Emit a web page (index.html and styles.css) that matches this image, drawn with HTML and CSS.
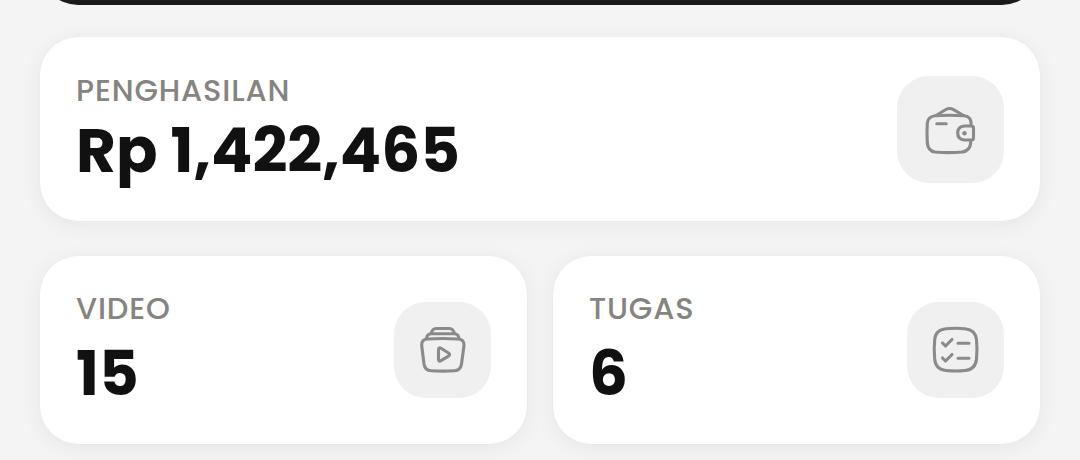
FILE: index.html
```html
<!DOCTYPE html>
<html lang="id">
<head>
    <meta charset="UTF-8">
    <title>Penghasilan</title>
    <link rel="stylesheet" href="styles.css">
</head>
<body>
<div class="wrap">
    <div class="banner"></div>
    <div class="card income">
        <div class="info">
            <p class="label">PENGHASILAN</p>
            <p class="value">Rp 1,422,465</p>
        </div>
        <div class="icon">
            <svg width="54" height="54" viewBox="0 0 54 54">
                <path d="M47 22V20Q46.500 14.500 40 13.700Q25 12.700 11 13.700Q4 14.500 3.300 21Q2.700 31 3.300 41Q4 49 11 50Q25 51.200 38 50Q46 49 46.700 41V38.500"/>
                <path d="M12 13.500L21.500 7.700Q25.500 5.300 29.500 7.700L39.500 13.500"/>
                <path d="M47.500 24H40.500Q33.700 24.500 33.700 31T40.500 38H47.500Q49.500 38 49.500 36V26Q49.500 24 47.500 24Z"/>
                <path d="M12.800 21.800H22.200"/>
                <circle class="dot" cx="40.500" cy="31.200" r="2.200"/>
            </svg>
        </div>
    </div>
    <div class="row">
        <div class="card">
            <div class="info">
                <p class="label">VIDEO</p>
                <p class="value">15</p>
            </div>
            <div class="icon">
                <svg width="48" height="48" viewBox="0 0 48 48">
                    <path d="M9 13Q2.300 13 2.700 19.500L5 38Q6 44.500 12 44.800Q23.500 45.500 35.500 44.800Q41.500 44.500 42.500 38L45 19.500Q45.300 13 38.500 13Q23.500 12 9 13Z"/>
                    <path d="M7.500 12.500Q8 7.800 12.500 7.800H35Q39.500 7.800 40 12.500"/>
                    <path d="M12 7.500Q13.500 2.500 17 2.500H30.500Q34 2.500 35.500 7.500"/>
                    <path d="M19.500 24Q19.500 21 22 22.300L29.500 27Q31.700 28.500 29.500 30.200L22 34.700Q19.500 36 19.500 33V24Z"/>
                </svg>
            </div>
        </div>
        <div class="card">
            <div class="info">
                <p class="label">TUGAS</p>
                <p class="value">6</p>
            </div>
            <div class="icon">
                <svg width="48" height="48" viewBox="0 0 48 48">
                    <path d="M14 2.700Q23.500 1.700 33 2.700Q43.500 3.700 44.500 13.700Q45.500 23.500 44.500 33Q43.500 43.500 33 44.500Q23.500 45.500 14 44.500Q3.500 43.500 2.700 33Q1.700 23.500 2.700 13.700Q3.500 3.700 14 2.700Z"/>
                    <path d="M10.500 17L13.500 20L20 13.500"/>
                    <path d="M10.500 32L13.500 35L20 28.500"/>
                    <path d="M26 17.300H37M26 32.300H37"/>
                </svg>
            </div>
        </div>
    </div>
</div>
</body>
</html>
```
FILE: styles.css
```css
body, p {
    margin: 0;
    padding: 0;
}

body {
    height: 460px;
    overflow: hidden;
    background: #f4f4f4;
    font-family: Poppins, Inter, "Liberation Sans", sans-serif;
}

.wrap {
    width: 1000px;
    margin: 0 auto;
}

.banner {
    height: 100px;
    margin: -95px 0 32px;
    border-radius: 38px;
    background: #1a1a1a;
}

.card {
    box-sizing: border-box;
    height: 188px;
    padding: 35px 36px;
    display: flex;
    justify-content: space-between;
    align-items: center;
    border-radius: 38px;
    background: #fff;
    box-shadow: 0 4px 22px rgba(0, 0, 0, 0.06), 0 0 2px rgba(0, 0, 0, 0.03);
}

.income {
    height: 184px;
    padding-top: 36px;
    padding-bottom: 36px;
}

.row {
    display: grid;
    grid-template-columns: 1fr 1fr;
    gap: 26px;
    margin-top: 35px;
}

.info {
    align-self: flex-start;
}

.label {
    font-size: 30.4px;
    line-height: 36px;
    font-weight: 500;
    letter-spacing: 0.85px;
    color: #858480;
    white-space: nowrap;
}

.value {
    margin-top: 7px;
    font-size: 61.2px;
    line-height: 80px;
    font-weight: 700;
    color: #111;
    white-space: nowrap;
}

.income .value {
    margin-top: 2px;
}

.icon {
    width: 97px;
    height: 96px;
    display: flex;
    align-items: center;
    justify-content: center;
    border-radius: 32px;
    background: #f0f0f0;
}

.income .icon {
    width: 107px;
    height: 107px;
}

.icon svg {
    fill: none;
    stroke: #8a8a8a;
    stroke-width: 3.1;
    stroke-linecap: round;
    stroke-linejoin: round;
}

.icon .dot {
    fill: #8a8a8a;
    stroke: none;
}
```
